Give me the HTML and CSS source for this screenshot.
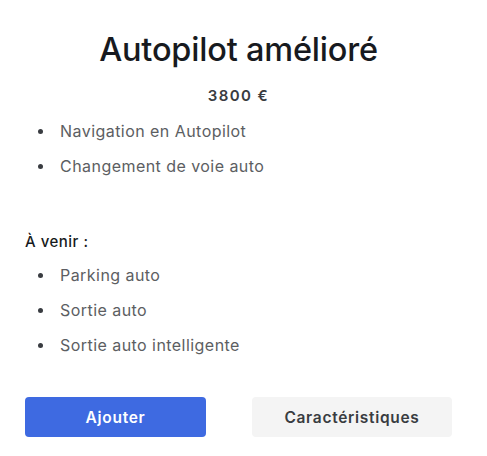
FILE: index.html
```html
<!DOCTYPE html>
<html lang="fr">
<head>
    <meta charset="UTF-8">
    <meta name="viewport" content="width=device-width, initial-scale=1.0">
    <title>Autopilot amélioré</title>
    <link rel="stylesheet" href="styles.css">
</head>
<body>
    <div class="option">
        <h1 class="title">Autopilot amélioré</h1>
        <div class="price">3800 €</div>
        <ul class="features">
            <li>Navigation en Autopilot</li>
            <li>Changement de voie auto</li>
        </ul>
        <div class="soon">À venir :</div>
        <ul class="features">
            <li>Parking auto</li>
            <li>Sortie auto</li>
            <li>Sortie auto intelligente</li>
        </ul>
        <div class="actions">
            <button class="btn btn-primary">Ajouter</button>
            <button class="btn btn-light">Caractéristiques</button>
        </div>
    </div>
</body>
</html>
```

FILE: styles.css
```css
body {
    font-family: Inter, "Noto Sans", Arial, sans-serif;
    margin: 0;
    padding: 0;
    background: #fff;
    color: #171a20;
}

.option {
    width: 427px;
    margin-left: 25px;
    padding-top: 28px;
}

.title {
    font-size: 32.5px;
    font-weight: 500;
    text-align: center;
    margin: 0;
    line-height: 44px;
    letter-spacing: -0.2px;
}

.price {
    text-align: center;
    font-size: 15px;
    font-weight: 600;
    margin-top: 14px;
    letter-spacing: 1.4px;
    color: #393c41;
}

.features {
    list-style: none;
    margin: 9px 0 0;
    padding-left: 13px;
    color: #5c5e62;
    font-size: 16px;
    letter-spacing: 0.45px;
}

.features li {
    display: flex;
    align-items: center;
    gap: 17px;
    line-height: 20px;
    padding: 7px 0 8px;
}

.features li::before {
    content: "";
    width: 5px;
    height: 5px;
    border-radius: 50%;
    background: #393c41;
    flex-shrink: 0;
}

.soon {
    font-size: 15px;
    font-weight: 500;
    margin-top: 48px;
    line-height: 20px;
    letter-spacing: 0.5px;
}

.soon + .features {
    margin-top: 6px;
}

.actions {
    display: flex;
    justify-content: space-between;
    margin-top: 34px;
}

.btn {
    height: 40px;
    border: none;
    border-radius: 4px;
    font-family: inherit;
    font-size: 15.5px;
    font-weight: 600;
    letter-spacing: 0.7px;
    cursor: pointer;
}

.btn-primary {
    width: 181px;
    background: #3e6ae1;
    color: #fff;
}

.btn-light {
    width: 200px;
    background: #f4f4f4;
    color: #393c41;
}
```
